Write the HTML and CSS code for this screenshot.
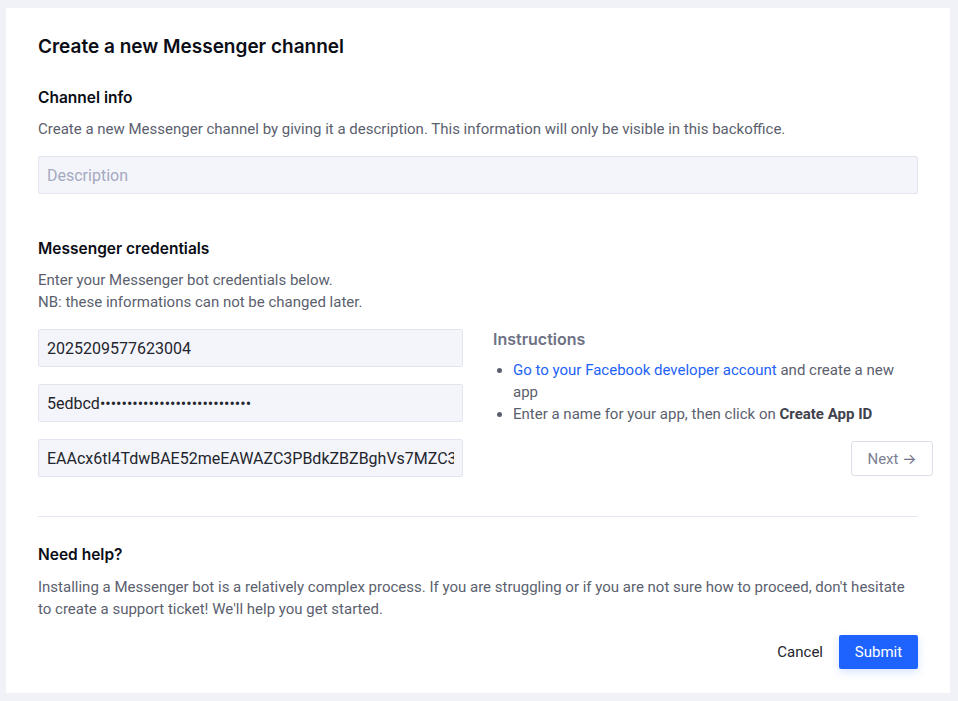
FILE: index.html
```html
<!DOCTYPE html>
<html lang="en">
<head>
<meta charset="utf-8">
<title>Create a new Messenger channel</title>
<link rel="stylesheet" href="styles.css">
</head>
<body>
<div class="card">
  <h1 class="title">Create a new Messenger channel</h1>

  <h2 class="section-title first">Channel info</h2>
  <p class="text one">Create a new Messenger channel by giving it a description. This information will only be visible in this backoffice.</p>
  <input class="input full" type="text" placeholder="Description">

  <h2 class="section-title creds">Messenger credentials</h2>
  <p class="text one">Enter your Messenger bot credentials below.<br>NB: these informations can not be changed later.</p>

  <div class="cred-grid">
    <div class="cred-inputs">
      <input class="input" type="text" value="2025209577623004" readonly>
      <input class="input" type="text" value="5edbcd••••••••••••••••••••••••••••" readonly>
      <input class="input" type="text" value="EAAcx6tl4TdwBAE52meEAWAZC3PBdkZBZBghVs7MZC3ZBZD" readonly>
    </div>
    <div class="instructions">
      <h3 class="inst-title">Instructions</h3>
      <ul class="inst-list">
        <li><span class="link">Go to your Facebook developer account</span> and create a new app</li>
        <li>Enter a name for your app, then click on <b>Create App ID</b></li>
      </ul>
      <div class="next-row"><span class="btn-next">Next <span class="arrow">→</span></span></div>
    </div>
  </div>

  <hr class="divider">

  <h2 class="section-title help">Need help?</h2>
  <p class="text help-text">Installing a Messenger bot is a relatively complex process. If you are struggling or if you are not sure how to proceed, don't hesitate to create a support ticket! We'll help you get started.</p>

  <div class="actions">
    <span class="btn-cancel">Cancel</span>
    <span class="btn-submit">Submit</span>
  </div>
</div>
</body>
</html>
```

FILE: styles.css
```css
* { box-sizing: border-box; }
html, body { margin: 0; padding: 0; }
body {
  background: #f1f2f8;
  font-family: Roboto, "Liberation Sans", Arial, sans-serif;
  width: 958px;
  height: 701px;
  overflow: hidden;
}
.card {
  background: #ffffff;
  margin: 8px 0 0 6px;
  width: 944px;
  height: 685px;
  padding: 27px 32px 0 32px;
}
.title {
  margin: 0;
  font-family: Inter, "Liberation Sans", sans-serif;
  font-weight: 600;
  font-size: 19px;
  line-height: 24px;
  color: #0b0d16;
}
.section-title {
  margin: 0;
  font-family: Inter, "Liberation Sans", sans-serif;
  font-weight: 600;
  font-size: 15.5px;
  line-height: 20px;
  color: #0b0d16;
}
.section-title.first { margin-top: 29px; }
.section-title.creds { margin-top: 45px; }
.section-title.help { margin-top: 28px; }
.text {
  margin: 10px 0 0 0;
  font-size: 15px;
  line-height: 22px;
  color: #5b5f6e;
}
.help-text { margin-top: 11px; }
.input {
  display: block;
  width: 100%;
  height: 38px;
  margin: 16px 0 0 0;
  background: #f4f5fa;
  border: 1px solid #e2e5f0;
  border-radius: 2px;
  padding: 0 8px;
  font-family: Roboto, "Liberation Sans", Arial, sans-serif;
  font-size: 16px;
  color: #23252d;
  outline: none;
}
.input::placeholder { color: #a4a9c0; opacity: 1; }
.input.full { width: 880px; }
.cred-grid {
  display: flex;
  gap: 30px;
  margin-top: 16px;
  margin-right: -15px;
}
.cred-inputs {
  width: 425px;
  flex: none;
  display: flex;
  flex-direction: column;
  gap: 17px;
}
.cred-inputs .input { margin-top: 0; }
.instructions { flex: 1; }
.inst-title {
  margin: 0;
  font-family: Inter, "Liberation Sans", sans-serif;
  font-weight: 600;
  font-size: 16px;
  line-height: 20px;
  color: #6e7284;
}
.inst-list {
  margin: 10px 20px 0 0;
  padding-left: 20px;
  font-size: 15px;
  line-height: 22px;
  color: #5b5f6e;
}
.inst-list b { color: #3f424e; font-weight: 700; }
.link { color: #1e63f6; }
.next-row {
  display: flex;
  justify-content: flex-end;
  margin-top: 16px;
}
.btn-next {
  width: 82px;
  height: 35px;
  border: 1px solid #dcdfe8;
  border-radius: 3px;
  text-align: center;
  font-size: 15px;
  line-height: 33px;
  color: #7c8092;
}
.arrow {
  font-family: Inter, "DejaVu Sans", sans-serif;
  font-size: 15px;
  color: #6e7284;
}
.divider {
  margin: 39px 0 0 0;
  border: 0;
  border-top: 1px solid #e3e7f1;
  height: 0;
}
.actions {
  display: flex;
  justify-content: flex-end;
  align-items: center;
  gap: 16px;
  margin-top: 15px;
}
.btn-cancel {
  font-size: 15px;
  color: #23252d;
}
.btn-submit {
  width: 79px;
  height: 34px;
  background: #1f63ff;
  color: #ffffff;
  border-radius: 2px;
  font-size: 15px;
  line-height: 34px;
  text-align: center;
  box-shadow: 0 3px 8px rgba(31, 99, 255, 0.18);
}
```
